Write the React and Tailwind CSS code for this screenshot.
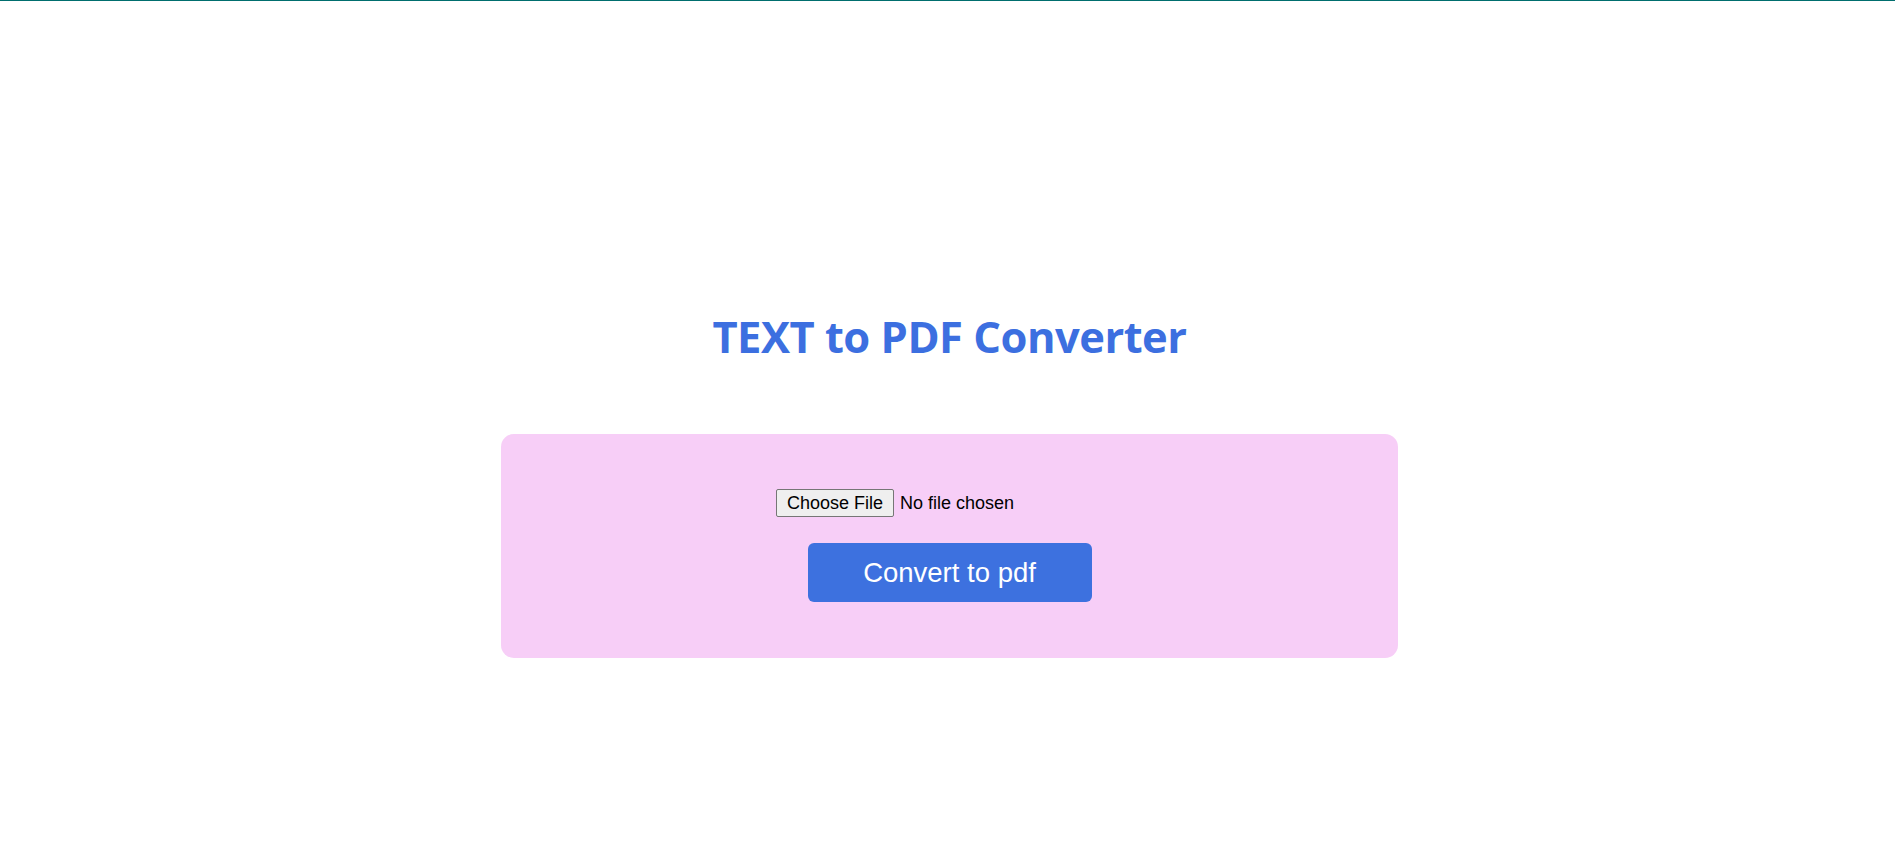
export default function App() {
  return (
    <div className="min-h-[852px] w-full bg-white border-t border-[#006e6e] flex flex-col items-center pl-[4px]">
      <h1 className="mt-[304px] text-[43.5px] leading-[64px] font-bold text-[#3c6fe0] font-['Open_Sans',sans-serif] tracking-[-0.5px]">
        TEXT to PDF Converter
      </h1>
      <div className="mt-[65px] w-[897px] h-[224px] rounded-[13px] bg-[#f7cef7] flex flex-col items-center pt-[55px]">
        <input
          type="file"
          className="w-[347px] h-[28px] text-[18px] text-black font-['Liberation_Sans',Arial,sans-serif] file:h-[28px] file:px-[10px] file:mr-[6px] file:bg-[#efefef] file:border file:border-[#767676] file:rounded-[2px] file:text-black"
        />
        <button className="mt-[26px] w-[284px] h-[59px] rounded-[6px] bg-[#3d71df] text-white text-[27.5px] font-['Liberation_Sans',Arial,sans-serif]">
          Convert to pdf
        </button>
      </div>
    </div>
  );
}
